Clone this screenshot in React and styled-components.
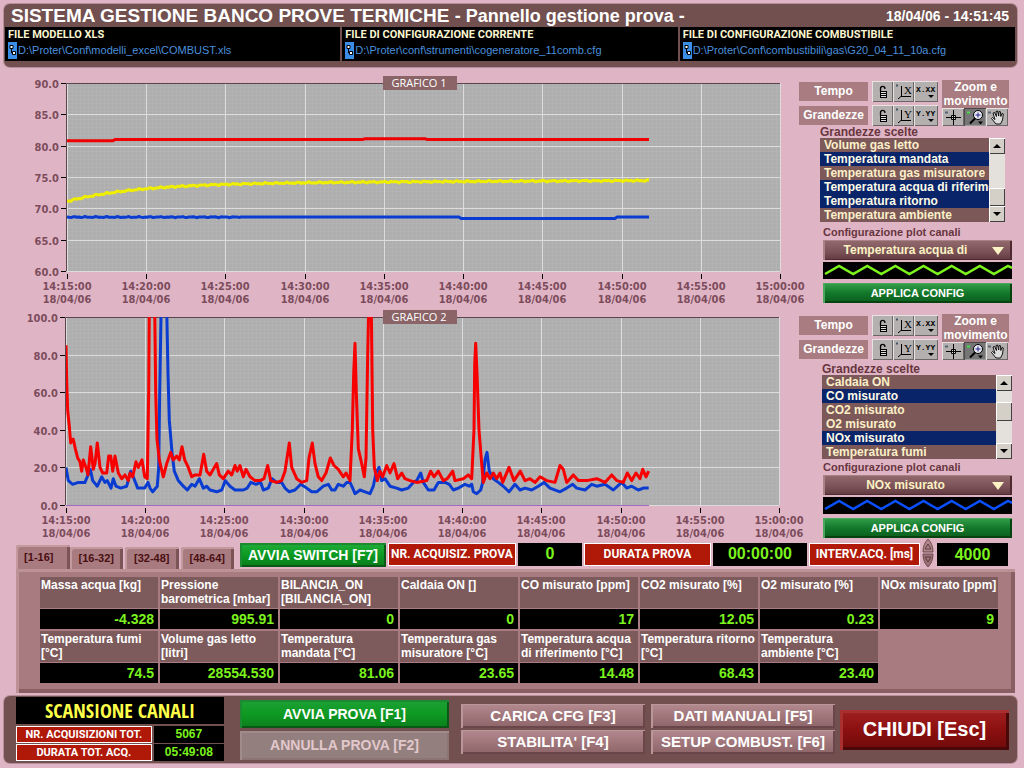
import React, { useState } from "react";
import styled, { createGlobalStyle, css } from "styled-components";

const FILES = [
  { label: "FILE MODELLO XLS", path: "D:\\Proter\\Conf\\modelli_excel\\COMBUST.xls" },
  {
    label: "FILE DI CONFIGURAZIONE CORRENTE",
    path: "D:\\Proter\\conf\\strumenti\\cogeneratore_11comb.cfg",
  },
  {
    label: "FILE DI CONFIGURAZIONE COMBUSTIBILE",
    path: "D:\\Proter\\Conf\\combustibili\\gas\\G20_04_11_10a.cfg",
  },
];

const TABS = ["[1-16]", "[16-32]", "[32-48]", "[48-64]"];

const CHANNELS = [
  ["Massa acqua [kg]", "-4.328"],
  ["Pressione barometrica [mbar]", "995.91"],
  ["BILANCIA_ON [BILANCIA_ON]", "0"],
  ["Caldaia ON []", "0"],
  ["CO misurato [ppm]", "17"],
  ["CO2 misurato [%]", "12.05"],
  ["O2 misurato [%]", "0.23"],
  ["NOx misurato [ppm]", "9"],
  ["Temperatura fumi [°C]", "74.5"],
  ["Volume gas letto [litri]", "28554.530"],
  ["Temperatura mandata [°C]", "81.06"],
  ["Temperatura gas misuratore [°C]", "23.65"],
  ["Temperatura acqua di riferimento [°C]", "14.48"],
  ["Temperatura ritorno [°C]", "68.43"],
  ["Temperatura ambiente [°C]", "23.40"],
];

const TIMES = [
  "14:15:00",
  "14:20:00",
  "14:25:00",
  "14:30:00",
  "14:35:00",
  "14:40:00",
  "14:45:00",
  "14:50:00",
  "14:55:00",
  "15:00:00",
];

// small repeatable ripple so the lines look sampled
const ripple = (i) => Math.sin(i * 2.3) * 0.5 + Math.sin(i * 5.1) * 0.5;

const trace = (fn, step = 2) => {
  const out = [];
  for (let t = 0; t <= 1748; t += step * 3) out.push([t, fn(t, out.length)]);
  return out;
};

const MANDATA = trace((t) => (t < 140 ? 80.8 : t > 890 && t < 1080 ? 81.1 : 81));
const ACQUA = trace((t, i) => 71.1 + 2.9 * (1 - Math.exp(-t / 210)) + t * 0.00025 + ripple(i) * 0.16);
const RITORNO = trace((t, i) => (t > 1180 && t < 1650 ? 68.4 : 68.6) + (t < 520 ? ripple(i) * 0.1 : 0));

// [time, value], three time units to a chart pixel
const CO = [
  [0, 85], [2, 66], [5, 50], [10, 42], [14, 33], [22, 35], [28, 30], [35, 25], [42, 23], [47, 18],
  [52, 24], [60, 20], [66, 16], [74, 31], [82, 19], [87, 22], [94, 33], [102, 20], [110, 17], [122, 17],
  [128, 26], [134, 26], [140, 18], [147, 26], [157, 17], [167, 14], [177, 16], [187, 13], [192, 17],
  [200, 15], [210, 23], [217, 20], [228, 24], [236, 15], [244, 14], [248, 60], [250, 105], [266, 105],
  [269, 60], [273, 35], [280, 24], [292, 15], [302, 22], [314, 28], [322, 24], [332, 26], [340, 24],
  [348, 31], [356, 24], [367, 20], [377, 15], [387, 16], [402, 16], [413, 27], [422, 18], [432, 16],
  [442, 19], [452, 22], [460, 16], [472, 14], [487, 18], [497, 16], [507, 21], [514, 18], [522, 21],
  [532, 15], [540, 19], [552, 15], [567, 13], [582, 13], [594, 14], [605, 21], [614, 13], [632, 12],
  [647, 13], [657, 18], [670, 33], [677, 20], [692, 14], [707, 12], [722, 13], [729, 25], [739, 33],
  [747, 22], [757, 15], [767, 13], [780, 17], [793, 25], [804, 21], [817, 19], [832, 15], [840, 17],
  [852, 13], [859, 40], [863, 70], [867, 86], [871, 60], [877, 30], [887, 22], [895, 15], [900, 25],
  [905, 80], [908, 105], [916, 105], [920, 40], [925, 20], [934, 13], [942, 18], [950, 15], [962, 21],
  [972, 17], [984, 22], [995, 14], [1007, 17], [1017, 14], [1032, 13], [1052, 12], [1082, 13],
  [1094, 18], [1104, 15], [1117, 18], [1132, 13], [1144, 14], [1160, 18], [1167, 13], [1192, 14],
  [1207, 16], [1217, 14], [1224, 40], [1226, 75], [1229, 86], [1233, 70], [1239, 40], [1247, 22],
  [1252, 12], [1262, 17], [1272, 14], [1282, 17], [1292, 14], [1302, 17], [1310, 12], [1329, 20],
  [1344, 13], [1363, 18], [1377, 13], [1392, 14], [1407, 12], [1422, 15], [1442, 13], [1467, 12],
  [1482, 21], [1492, 19], [1502, 12], [1522, 16], [1537, 13], [1562, 13], [1592, 14], [1617, 12],
  [1637, 16], [1652, 13], [1672, 12], [1684, 17], [1697, 13], [1710, 17], [1722, 14], [1730, 19],
  [1740, 15], [1748, 18],
];

const NOX = [
  [0, 20], [7, 13], [20, 11], [37, 12], [57, 12], [73, 19], [80, 13], [94, 10], [107, 15], [117, 12],
  [124, 13], [135, 9], [142, 14], [150, 10], [164, 9], [182, 10], [194, 18], [204, 14], [215, 9],
  [227, 9], [236, 9], [246, 12], [252, 9], [260, 7], [274, 10], [278, 20], [281, 60], [285, 100],
  [288, 105], [302, 105], [306, 70], [310, 45], [318, 28], [325, 18], [337, 13], [352, 10], [364, 8],
  [377, 11], [387, 10], [400, 14], [412, 9], [422, 10], [432, 8], [452, 7], [467, 8], [478, 13],
  [492, 10], [507, 8], [532, 8], [544, 9], [554, 12], [570, 11], [584, 12], [592, 8], [607, 9],
  [618, 14], [632, 12], [647, 12], [657, 9], [670, 7], [687, 8], [704, 11], [722, 9], [737, 7],
  [752, 7], [772, 10], [787, 11], [797, 8], [807, 8], [817, 11], [832, 10], [842, 12], [852, 12],
  [860, 9], [867, 6], [882, 8], [897, 7], [912, 6], [922, 10], [930, 17], [939, 20], [947, 13],
  [957, 14], [972, 10], [992, 9], [1007, 8], [1027, 9], [1042, 12], [1052, 13], [1064, 17], [1072, 12],
  [1087, 8], [1104, 8], [1117, 12], [1137, 12], [1150, 11], [1162, 8], [1177, 9], [1197, 11],
  [1210, 10], [1217, 11], [1222, 7], [1232, 6], [1244, 8], [1250, 12], [1257, 24], [1263, 28],
  [1270, 18], [1282, 14], [1297, 12], [1312, 10], [1329, 7], [1347, 11], [1362, 8], [1377, 9],
  [1397, 8], [1417, 10], [1434, 12], [1452, 9], [1482, 7], [1502, 9], [1520, 11], [1532, 9], [1557, 8],
  [1577, 11], [1592, 10], [1617, 11], [1642, 8], [1667, 12], [1682, 9], [1697, 10], [1717, 8],
  [1732, 9], [1748, 9],
];

const PLOT_W = 713;
const PLOT_H = 188;

function Chart({ title, left, min, max, step, series, height, baseline }) {
  const top = 8;
  const yOf = (v) => top + PLOT_H - ((v - min) / (max - min)) * PLOT_H;
  const ticks = [];
  for (let v = min; v <= max; v += step) ticks.push(v);
  const id = title.replace(" ", "");

  return (
    <ChartSvg viewBox={`0 0 790 ${height}`} role="img" aria-label={title}>
      <defs>
        <pattern id={`${id}-fine`} width="4" height="4" patternUnits="userSpaceOnUse">
          <rect width="4" height="4" fill="#aeaeae" />
          <path d="M0 .5H4M.5 0V4" stroke="#b3b3b3" />
        </pattern>
        <clipPath id={`${id}-clip`}>
          <rect x={left} y={top} width={PLOT_W} height={PLOT_H} />
        </clipPath>
      </defs>
      <rect x={left} y={top} width={PLOT_W} height={PLOT_H} fill={`url(#${id}-fine)`} />
      {ticks.map((v) => (
        <g key={v}>
          <path d={`M${left} ${Math.round(yOf(v)) + 0.5}h${PLOT_W}`} stroke="#dcdcdc" />
          <path d={`M${left - 6} ${Math.round(yOf(v)) + 0.5}h5`} stroke="#000" />
          <AxisText x={left - 8} y={Math.round(yOf(v)) + 5} textAnchor="end">
            {v.toFixed(1)}
          </AxisText>
        </g>
      ))}
      {TIMES.map((time, i) => {
        const x = left + Math.round((i * PLOT_W) / 9);
        return (
          <g key={time}>
            <path d={`M${x + 0.5} ${top}v${PLOT_H}`} stroke="#dcdcdc" />
            <path d={`M${x + 0.5} ${top + PLOT_H + 3}v5`} stroke="#000" />
            <AxisText x={x} y={top + PLOT_H + 19} textAnchor="middle">
              {time}
            </AxisText>
            <AxisText x={x} y={top + PLOT_H + 32} textAnchor="middle">
              18/04/06
            </AxisText>
          </g>
        );
      })}
      <path d={`M${left - 0.5} ${top + PLOT_H}V${top + 0.5}H${left + PLOT_W}`} fill="none" stroke="#5a464c" />
      {baseline && <path d={`M${left} ${top + PLOT_H + 0.5}h583`} stroke="#a46cc0" />}
      <g clipPath={`url(#${id}-clip)`}>
        {series.map(({ color, data }) => (
          <polyline
            key={color}
            points={data.map(([t, v]) => `${(left + t / 3).toFixed(1)},${yOf(v).toFixed(1)}`).join(" ")}
            fill="none"
            stroke={color}
            strokeWidth="3"
            strokeLinejoin="round"
          />
        ))}
      </g>
      <rect x="383" y="1" width="74" height="14" fill="#8a6466" />
      <BadgeText x="419" y="12" textAnchor="middle">
        {title}
      </BadgeText>
    </ChartSvg>
  );
}

const LockIcon = () => (
  <svg width="20" height="20" viewBox="0 0 20 20" fill="none" stroke="#000">
    <path d="M7.5 9.500V6.500a2.200 2.200 0 0 1 4.400 0V7" strokeWidth="1.300" />
    <rect x="7.5" y="9.5" width="6" height="6" fill="#ddd" />
    <path d="M8 11.5h5M8 13.5h5" />
  </svg>
);

const AxisIcon = ({ name }) => (
  <svg width="20" height="20" viewBox="0 0 20 20" fill="none" stroke="#000">
    <path d="M7.5 4v10M7 14.5h10M7.500 14l-3.500 3" />
    <path d="M2 3.500h2" stroke="#456" strokeWidth="2" />
    <AxisName x="10" y="12">
      {name}
    </AxisName>
  </svg>
);

const FormatIcon = ({ name }) => (
  <svg width="22" height="20" viewBox="0 0 22 20">
    <IconText x="1" y="10">
      {name}
    </IconText>
    <path d="M13 13h6l-3 3z" fill="#000" />
  </svg>
);

const CrossIcon = () => (
  <svg width="20" height="16" viewBox="0 0 20 16" fill="none" stroke="#000">
    <path d="M10.500 1v5M10.500 11v5M3 8.500h5M13 8.500h5" />
    <path d="M8.500 6.500h4v4h-4z" fill="#ddd" />
    <path d="M10.500 6v5M8 8.500h5" />
    <path d="M2 3.500h3" stroke="#567" strokeWidth="2" />
  </svg>
);

const ZoomIcon = () => (
  <svg width="20" height="16" viewBox="0 0 20 16" fill="none" stroke="#000">
    <circle cx="13" cy="6" r="4.500" fill="#e8e8f4" />
    <path d="M10 9.500L5 14.500" strokeWidth="2" />
    <path d="M10.500 6h5M13 3.500v5" stroke="#228" />
    <path d="M13 12.500h5l-2.500 3z" fill="#000" stroke="none" />
    <path d="M2 3.500h3" stroke="#4d4" strokeWidth="2" />
  </svg>
);

const HandIcon = () => (
  <svg width="20" height="16" viewBox="0 0 20 16" stroke="#000" strokeWidth="0.900" strokeLinejoin="round">
    <path
      d="M9 15L4.500 9.500 5.500 8.500l2.500 2L6 4 7.500 3.500 9.500 7.500 9 2.500 10.500 2l1.200 5L12 2.500l1.500.3.3 4.700L15 4.500l1.300.5L15.500 11 13.500 15z"
      fill="#ddd"
    />
    <path d="M1 3.500h3" stroke="#567" strokeWidth="2" />
  </svg>
);

function ChannelPanel({ items, chosen, plotChannel, lineColor, listWidth, indent, scroll, thumb, gap, plotGap }) {
  const id = plotChannel.replace(/ /g, "");
  return (
    <Panel>
      <Tools>
        <ScaleTools>
          <ToolLabel>Tempo</ToolLabel>
          <ToolButtons>
            <ToolButton aria-label="Blocca tempo">
              <LockIcon />
            </ToolButton>
            <ToolButton aria-label="Scala tempo">
              <AxisIcon name="X" />
            </ToolButton>
            <ToolButton aria-label="Formato tempo" $wide>
              <FormatIcon name="X.XX" />
            </ToolButton>
          </ToolButtons>
          <ToolLabel>Grandezze</ToolLabel>
          <ToolButtons>
            <ToolButton aria-label="Blocca grandezze">
              <LockIcon />
            </ToolButton>
            <ToolButton aria-label="Scala grandezze">
              <AxisIcon name="Y" />
            </ToolButton>
            <ToolButton aria-label="Formato grandezze" $wide>
              <FormatIcon name="Y.YY" />
            </ToolButton>
          </ToolButtons>
        </ScaleTools>
        <ZoomTools>
          <ZoomLabel>Zoom e movimento</ZoomLabel>
          <ToolButtons>
            <ToolButton aria-label="Cursore" $low>
              <CrossIcon />
            </ToolButton>
            <ToolButton aria-label="Zoom" $low $active>
              <ZoomIcon />
            </ToolButton>
            <ToolButton aria-label="Sposta" $low>
              <HandIcon />
            </ToolButton>
          </ToolButtons>
        </ZoomTools>
      </Tools>
      <ListArea $indent={indent} $gap={gap}>
        <PanelLabel htmlFor={`list-${id}`}>Grandezze scelte</PanelLabel>
        <ListRow>
          <ChannelList id={`list-${id}`} multiple size={6} defaultValue={chosen} $width={listWidth}>
            {items.map((item) => (
              <option key={item}>{item}</option>
            ))}
          </ChannelList>
          <ScrollBar>
            <ScrollButton aria-label="Su">
              <svg width="8" height="4">
                <path d="M4 0L8 4H0z" />
              </svg>
            </ScrollButton>
            <ScrollTrack $before={scroll}>
              <ScrollThumb $size={thumb} />
            </ScrollTrack>
            <ScrollButton aria-label="Giù">
              <svg width="8" height="4">
                <path d="M0 0H8L4 4z" />
              </svg>
            </ScrollButton>
          </ScrollBar>
        </ListRow>
      </ListArea>
      <PlotArea $gap={plotGap}>
        <PanelLabel htmlFor={`plot-${id}`}>Configurazione plot canali</PanelLabel>
        <SelectWrap>
          <PlotSelect id={`plot-${id}`} defaultValue={plotChannel}>
            <option>{plotChannel}</option>
          </PlotSelect>
          <SelectArrow width="14" height="9" viewBox="0 0 14 9">
            <path d="M1 0H13L7 8z" fill="#fbf3c4" />
          </SelectArrow>
        </SelectWrap>
        <Wave viewBox="0 0 188 17" preserveAspectRatio="none">
          <path
            d="M2 12L16 4 30 12 44 4 58 12 72 4 86 12 100 4 114 12 128 4 142 12 156 4 170 12 184 4 188 6"
            fill="none"
            stroke={lineColor}
            strokeWidth="2.500"
          />
        </Wave>
        <ApplyButton>APPLICA CONFIG</ApplyButton>
      </PlotArea>
    </Panel>
  );
}

function App() {
  const [tab, setTab] = useState(0);

  return (
    <Page>
      <GlobalStyle />
      <Header>
        <TitleRow>
          <Title>
            SISTEMA GESTIONE BANCO PROVE TERMICHE <small>- Pannello gestione prova -</small>
          </Title>
          <Clock>18/04/06 - 14:51:45</Clock>
        </TitleRow>
        <FileRow>
          {FILES.map((file) => (
            <FileCell key={file.label}>
              <FileLabel>{file.label}</FileLabel>
              <FilePath>
                <svg width="9" height="17" viewBox="0 0 9 17">
                  <rect width="9" height="17" fill="#3a8ee6" />
                  <path d="M2 3.500h3v3H2zM4.500 9.500h3v3h-3zM3.500 6.500v4.500h1" fill="#fff" stroke="#000" />
                </svg>
                {file.path}
              </FilePath>
            </FileCell>
          ))}
        </FileRow>
      </Header>

      <ChartRow>
        <ChartBox>
          <Chart
            title="GRAFICO 1"
            left={67}
            min={60}
            max={90}
            step={5}
            height={234}
            series={[
              { color: "#f00000", data: MANDATA },
              { color: "#f0ee00", data: ACQUA },
              { color: "#0a3cd2", data: RITORNO },
            ]}
          />
        </ChartBox>
        <ChannelPanel
          items={[
            "Volume gas letto",
            "Temperatura mandata",
            "Temperatura gas misuratore",
            "Temperatura acqua di riferimento",
            "Temperatura ritorno",
            "Temperatura ambiente",
          ]}
          chosen={["Temperatura mandata", "Temperatura acqua di riferimento", "Temperatura ritorno"]}
          plotChannel="Temperatura acqua di"
          lineColor="#7cf31c"
          listWidth={169}
          indent={21}
          gap={0}
          plotGap={4}
          scroll={34}
          thumb={18}
        />
      </ChartRow>
      <ChartRow>
        <ChartBox>
          <Chart
            title="GRAFICO 2"
            left={66}
            min={0}
            max={100}
            step={20}
            height={234}
            baseline
            series={[
              { color: "#0a3cd2", data: NOX },
              { color: "#f80000", data: CO },
            ]}
          />
        </ChartBox>
        <ChannelPanel
          items={["Caldaia ON", "CO misurato", "CO2 misurato", "O2 misurato", "NOx misurato", "Temperatura fumi"]}
          chosen={["CO misurato", "NOx misurato"]}
          plotChannel="NOx misurato"
          lineColor="#0a50ff"
          listWidth={174}
          indent={23}
          gap={3}
          plotGap={2}
          scroll={11}
          thumb={19}
        />
      </ChartRow>

      <StatusRow>
        <Tabs role="tablist">
          {TABS.map((name, i) => (
            <Tab key={name} role="tab" aria-selected={i === tab} $active={i === tab} onClick={() => setTab(i)}>
              {name}
            </Tab>
          ))}
        </Tabs>
        <SwitchButton>AVVIA SWITCH [F7]</SwitchButton>
        <StatusPair $grow={194}>
          <RedLabel $grow={127}>NR. ACQUISIZ. PROVA</RedLabel>
          <Display $grow={65}>0</Display>
        </StatusPair>
        <StatusPair $grow={223}>
          <RedLabel $grow={126}>DURATA PROVA</RedLabel>
          <Display $grow={95}>00:00:00</Display>
        </StatusPair>
        <StatusPair $grow={199}>
          <RedLabel as="label" htmlFor="interval" $grow={111}>
            INTERV.ACQ. [ms]
          </RedLabel>
          <Spinner>
            <button aria-label="Aumenta">
              <svg width="12" height="14" viewBox="0 0 12 14">
                <path d="M6 0C9 3 11 7 11 13H1C1 7 3 3 6 0z" fill="#b08488" stroke="#6d4b50" />
                <path d="M6 5L9 10H3z" fill="none" stroke="#5a3c40" />
              </svg>
            </button>
            <button aria-label="Diminuisci">
              <svg width="12" height="14" viewBox="0 0 12 14">
                <path d="M6 14C9 11 11 7 11 1H1C1 7 3 11 6 14z" fill="#9c7074" stroke="#6d4b50" />
                <path d="M6 9L9 4H3z" fill="none" stroke="#5a3c40" />
              </svg>
            </button>
          </Spinner>
          <IntervalInput id="interval" defaultValue="4000" />
        </StatusPair>
      </StatusRow>

      <ChannelBoard>
        {CHANNELS.map(([name, value]) => (
          <Channel key={name}>
            <ChannelName>{name}</ChannelName>
            <ChannelValue>{value}</ChannelValue>
          </Channel>
        ))}
      </ChannelBoard>

      <Footer>
        <ScanBox>
          <ScanTitle>SCANSIONE CANALI</ScanTitle>
          <ScanLine>
            <ScanLabel>NR. ACQUISIZIONI TOT.</ScanLabel>
            <ScanValue>5067</ScanValue>
          </ScanLine>
          <ScanLine>
            <ScanLabel>DURATA TOT. ACQ.</ScanLabel>
            <ScanValue>05:49:08</ScanValue>
          </ScanLine>
        </ScanBox>
        <TestButtons>
          <StartButton>AVVIA PROVA [F1]</StartButton>
          <CancelButton disabled>ANNULLA PROVA [F2]</CancelButton>
        </TestButtons>
        <ActionGrid>
          <ActionButton>CARICA CFG [F3]</ActionButton>
          <ActionButton>DATI MANUALI [F5]</ActionButton>
          <ActionButton>STABILITA' [F4]</ActionButton>
          <ActionButton>SETUP COMBUST. [F6]</ActionButton>
        </ActionGrid>
        <CloseButton>CHIUDI [Esc]</CloseButton>
      </Footer>
    </Page>
  );
}

export default App;

const GlobalStyle = createGlobalStyle`
  * {
    box-sizing: border-box;
  }
  body {
    margin: 0;
    background: #dfb5c5;
    font-family: "Liberation Sans", Arial, sans-serif;
    font-size: 12px;
    font-weight: bold;
  }
  button, select, input {
    margin: 0;
    padding: 0;
    border: 0;
    border-radius: 0;
    font: inherit;
  }
  svg {
    display: block;
  }
`;

const Page = styled.div`
  min-width: 1000px;
  padding: 4px 7px 4px 4px;
`;

const Header = styled.header`
  padding: 0 2px 6px 1px;
  border-radius: 6px;
  background: #71504f;
  box-shadow: 0 0 0 1px #b78f98;
`;
const TitleRow = styled.div`
  display: flex;
  justify-content: space-between;
  align-items: center;
  height: 23px;
  padding: 0 6px;
  color: #fff;
`;
const Title = styled.h1`
  margin: 0;
  font-size: 19px;
  line-height: 23px;
  white-space: nowrap;

  small {
    font-size: 18px;
  }
`;
const Clock = styled.time`
  font-size: 14px;
`;
const FileRow = styled.div`
  display: grid;
  grid-template-columns: repeat(3, 1fr);
  gap: 2px;
`;
const FileCell = styled.div`
  height: 34px;
  padding: 0 3px;
  background: #000;
`;
const FileLabel = styled.div`
  color: #fbf5cf;
  font-family: Roboto, sans-serif;
  font-size: 11px;
  line-height: 15px;
`;
const FilePath = styled.div`
  display: flex;
  gap: 1px;
  color: #4a90dc;
  font-size: 11px;
  font-weight: normal;
  line-height: 17px;
`;

const ChartRow = styled.section`
  display: flex;
  align-items: flex-start;
  margin-left: -4px;

  &:first-of-type {
    margin-top: 8px;
  }
`;
const ChartBox = styled.div`
  flex: 1;
  min-width: 0;
`;
const ChartSvg = styled.svg`
  width: 100%;
  overflow: visible;
`;
const AxisText = styled.text`
  fill: #7c4c5c;
  font-family: "DejaVu Sans Condensed", "DejaVu Sans", sans-serif;
  font-size: 11px;
  font-weight: bold;
`;
const BadgeText = styled.text`
  fill: #fff;
  font-family: "Open Sans", sans-serif;
  font-size: 11px;
  font-weight: normal;
`;
const IconText = styled.text`
  fill: #000;
  stroke: none;
  font-family: "Liberation Mono", monospace;
  font-size: 8px;
  font-weight: bold;
`;
const AxisName = styled.text`
  fill: #000;
  stroke: none;
  font-family: "Liberation Serif", serif;
  font-size: 11px;
  font-weight: normal;
`;

const Panel = styled.div`
  flex: 0 0 227px;
  padding: 5px 5px 0 9px;
`;
const Tools = styled.div`
  display: flex;
  gap: 4px;
`;
const ScaleTools = styled.div`
  display: grid;
  grid-template-columns: 69px auto;
  gap: 3px 4px;
  align-items: center;
  padding-top: 1px;
`;
const ToolLabel = styled.div`
  color: #fff;
  background: #a87c80;
  line-height: 19px;
  text-align: center;
`;
const ToolButtons = styled.div`
  display: flex;
`;
const ToolButton = styled.button`
  display: flex;
  align-items: center;
  justify-content: center;
  width: ${({ $wide }) => ($wide ? 24 : 21)}px;
  height: 21px;
  overflow: hidden;
  background: #b4b0b0;
  box-shadow: inset 1px 1px #e6e2e2, inset -1px -1px #6c6666;
  cursor: pointer;

  ${({ $low }) =>
    $low &&
    css`
      width: 22px;
      height: 18px;
    `}
  ${({ $active }) =>
    $active &&
    css`
      background: #767676;
      box-shadow: inset 1px 1px #4a4a4a, inset -1px -1px #9a9a9a;
    `}
`;
const ZoomTools = styled.div`
  width: 67px;
`;
const ZoomLabel = styled.div`
  color: #fff;
  background: #a87c80;
  line-height: 14px;
  text-align: center;
`;
const ListArea = styled.div`
  padding: ${({ $gap }) => $gap}px 0 0 ${({ $indent }) => $indent}px;
`;
const PanelLabel = styled.label`
  display: block;
  color: #68353f;
  font-size: 12px;
  line-height: 12px;
`;
const ListRow = styled.div`
  display: flex;
`;
const ChannelList = styled.select`
  width: ${({ $width }) => $width}px;
  height: 84px;
  overflow: hidden;
  appearance: none;
  outline: 0;
  background: #7d5858;
  scrollbar-width: none;

  option {
    min-height: 14px;
    height: 14px;
    padding: 0 0 0 4px;
    -webkit-text-fill-color: #fbf0c8;
    font-size: 12px;
    font-weight: bold;
    line-height: 14px;
    white-space: nowrap;
  }
  option:checked {
    background: linear-gradient(#0a246a, #0a246a);
    -webkit-text-fill-color: #fdfbe8;
  }
`;
const ScrollBar = styled.div`
  display: flex;
  flex-direction: column;
  width: 16px;
  height: 84px;
`;
const raised = css`
  background: #d4d0c8;
  box-shadow: inset 1px 1px #fff, inset -1px -1px #404040;
`;
const ScrollButton = styled.button`
  ${raised}
  display: flex;
  align-items: center;
  justify-content: center;
  height: 16px;
`;
const ScrollTrack = styled.div`
  flex: 1;
  padding-top: ${({ $before }) => $before}px;
  background: #e4e1dc;
`;
const ScrollThumb = styled.div`
  ${raised}
  height: ${({ $size }) => $size}px;
`;
const PlotArea = styled.div`
  display: flex;
  flex-direction: column;
  padding: ${({ $gap }) => $gap}px 0 0 24px;

  ${PanelLabel} {
    margin-bottom: 2px;
    font-size: 11px;
  }
`;
const SelectWrap = styled.div`
  position: relative;
  margin-bottom: 2px;
`;
const PlotSelect = styled.select`
  display: block;
  width: 100%;
  height: 20px;
  padding-right: 24px;
  appearance: none;
  background: linear-gradient(#936a6e, #7a5156 60%, #62393e);
  box-shadow: inset 2px 1px #a98286, inset -2px -1px #4c2a2f;
  color: #fbf3c4;
  font-size: 12px;
  text-align: center;
  text-align-last: center;
`;
const SelectArrow = styled.svg`
  position: absolute;
  top: 7px;
  right: 7px;
  pointer-events: none;
`;
const Wave = styled.svg`
  width: 100%;
  height: 17px;
  margin-bottom: 4px;
  background: #000;
`;
const bevel = css`
  color: #fff;
  cursor: pointer;
  white-space: nowrap;
`;
const ApplyButton = styled.button`
  ${bevel}
  height: 20px;
  background: linear-gradient(#35a04c, #13782b 50%, #0a5c1c);
  box-shadow: inset 2px 1px #4aa85e, inset -2px -2px #07430f;
  font-size: 11px;
`;

const StatusRow = styled.div`
  display: flex;
  align-items: flex-start;
  height: 26px;
  margin-left: 12px;
  padding-right: 9px;
`;
const Tabs = styled.div`
  display: flex;
  align-items: flex-end;
  width: 220px;
  height: 26px;
`;
const Tab = styled.button`
  width: 54px;
  height: 22px;
  margin-right: 2px;
  border-radius: 3px 3px 0 0;
  background: #a87b80;
  box-shadow: inset 2px 2px #c49a9e, inset -3px 0 #7c5458;
  color: #4a0f12;
  font-size: 11px;
  cursor: pointer;

  ${({ $active }) =>
    $active &&
    css`
      height: 24px;
      margin-right: 0;
      padding-right: 8px;
    `}
`;
const SwitchButton = styled.button`
  ${bevel}
  flex: 0 0 146px;
  height: 24px;
  margin: 0 2px 0 4px;
  background: linear-gradient(#22ad3b, #0b9a22 50%, #0a7a1a);
  box-shadow: inset 2px 2px #1c8a30, inset -2px -2px #0a5716;
  font-size: 14px;
`;
const StatusPair = styled.div`
  display: flex;
  flex: ${({ $grow }) => `${$grow} 1 0`};
  gap: 2px;

  & + & {
    margin-left: 2px;
  }
`;
const RedLabel = styled.div`
  flex: ${({ $grow }) => `${$grow} 1 0`};
  height: 23px;
  border: 1px solid #fff;
  background: #b01808;
  color: #fff;
  font-family: Roboto, sans-serif;
  font-size: 12px;
  line-height: 21px;
  text-align: center;
  white-space: nowrap;
`;
const Display = styled.output`
  flex: ${({ $grow }) => `${$grow} 1 0`};
  height: 23px;
  background: #000;
  color: #7cf31c;
  font-size: 16px;
  line-height: 22px;
  text-align: center;
`;
const Spinner = styled.div`
  display: flex;
  flex-direction: column;
  width: 13px;
  margin-top: -4px;

  button {
    height: 14px;
    background: none;
  }
`;
const IntervalInput = styled.input`
  width: 71px;
  height: 23px;
  background: #000;
  color: #7cf31c;
  font-size: 16px;
  text-align: center;
`;

const ChannelBoard = styled.section`
  display: grid;
  grid-template-columns: repeat(8, 1fr);
  gap: 2px;
  height: 124px;
  margin: 0 2px 0 12px;
  padding: 8px 17px 8px 24px;
  align-content: start;
  background: #a87b80;
  box-shadow: inset 3px 3px #bd9296, inset -4px -4px #8a5f64;
`;
const Channel = styled.div`
  min-width: 0;
`;
const ChannelName = styled.div`
  height: 31px;
  padding: 1px;
  overflow: hidden;
  background: #7d5a5b;
  color: #fff;
  line-height: 14px;
`;
const ChannelValue = styled.div`
  height: 21px;
  padding-right: 4px;
  border-top: 1px solid #a87b80;
  background: #000;
  color: #7cf31c;
  font-size: 14px;
  line-height: 20px;
  text-align: right;
`;

const Footer = styled.footer`
  display: flex;
  align-items: center;
  height: 67px;
  margin-top: 3px;
  padding: 0 8px 0 12px;
  border-radius: 6px;
  background: #71504f;
  box-shadow: 0 0 0 1px #b78f98;
`;
const ScanBox = styled.div`
  flex: 208 1 0;
`;
const ScanTitle = styled.div`
  height: 27px;
  margin-bottom: 2px;
  overflow: hidden;
  background: #000;
  color: #ffff4a;
  font-family: "Open Sans Condensed", "Roboto Condensed", "Liberation Sans Narrow", sans-serif;
  font-size: 20px;
  line-height: 27px;
  text-align: center;
`;
const ScanLine = styled.div`
  display: flex;
  gap: 2px;
  margin-bottom: 1px;
`;
const ScanLabel = styled.div`
  flex: 135 1 0;
  border: 1px solid #fff;
  background: #b01808;
  color: #fff;
  font-family: Roboto, sans-serif;
  font-size: 11px;
  line-height: 15px;
  text-align: center;
  white-space: nowrap;
`;
const ScanValue = styled.div`
  flex: 71 1 0;
  background: #000;
  color: #7cf31c;
  font-size: 12px;
  line-height: 17px;
  text-align: center;
`;
const TestButtons = styled.div`
  display: flex;
  flex: 209 1 0;
  flex-direction: column;
  gap: 3px;
  margin-left: 16px;
`;
const StartButton = styled.button`
  ${bevel}
  height: 28px;
  background: linear-gradient(#1da136, #0e9a22 50%, #0b7e1c);
  box-shadow: inset 2px 2px #1c8a30, inset -2px -2px #0a5716;
  font-size: 14px;
`;
const CancelButton = styled.button`
  height: 29px;
  background: #93807e;
  box-shadow: inset 2px 2px #a28c8b, inset -2px -2px #8c7473;
  color: #e2c8cc;
  font-size: 14px;
`;
const ActionGrid = styled.div`
  display: grid;
  flex: 374 1 0;
  grid-template-columns: 1fr 1fr;
  gap: 2px 6px;
  margin: 0 0 2px 12px;
`;
const ActionButton = styled.button`
  ${bevel}
  height: 24px;
  background: linear-gradient(#b38a8f, #a0767b 50%, #8d6468);
  box-shadow: inset 2px 1px #b8969a, inset -2px -2px #6a464a;
  font-size: 15px;
`;
const CloseButton = styled.button`
  ${bevel}
  flex: 169 1 0;
  height: 40px;
  margin-left: 5px;
  background: linear-gradient(#a02020, #8c1010 50%, #6e0a0a);
  box-shadow: inset 3px 3px #a83030, inset -3px -3px #4a0808;
  font-size: 20px;
`;
